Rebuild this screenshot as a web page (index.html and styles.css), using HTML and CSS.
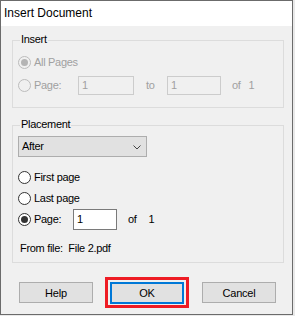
FILE: index.html
```html
<!DOCTYPE html>
<html>
<head>
<meta charset="utf-8">
<link rel="stylesheet" href="styles.css">
</head>
<body>
<div class="dialog">
  <div class="titlebar">Insert Document</div>
  <div class="content">
    <div class="group group-insert">
      <span class="legend">Insert</span>
      <div class="row row-a">
        <span class="radio radio-dis checked"></span>
        <span class="txt disabled">All Pages</span>
      </div>
      <div class="row row-b">
        <span class="radio radio-dis"></span>
        <span class="txt disabled lbl-page">Page:</span>
        <span class="input input-dis in1">1</span>
        <span class="txt disabled lbl-to">to</span>
        <span class="input input-dis in2">1</span>
        <span class="txt disabled lbl-of">of</span>
        <span class="txt disabled lbl-one">1</span>
      </div>
    </div>

    <div class="group group-place">
      <span class="legend">Placement</span>
      <div class="select">
        <span class="txt">After</span>
        <svg class="chev" width="8" height="5" viewBox="0 0 8 5"><polyline points="0.5,0.5 4,4 7.5,0.5" fill="none" stroke="#444" stroke-width="1"/></svg>
      </div>
      <div class="row row-c">
        <span class="radio"></span>
        <span class="txt">First page</span>
      </div>
      <div class="row row-c">
        <span class="radio"></span>
        <span class="txt">Last page</span>
      </div>
      <div class="row row-c">
        <span class="radio checked"></span>
        <span class="txt lbl-page2">Page:</span>
        <span class="input in3">1</span>
        <span class="txt lbl-of2">of</span>
        <span class="txt lbl-one2">1</span>
      </div>
      <div class="fromfile txt">From file:&nbsp; File 2.pdf</div>
    </div>

    <div class="buttons">
      <div class="btn btn-help">Help</div>
      <div class="btn btn-ok">OK<span class="mark"></span></div>
      <div class="btn btn-cancel">Cancel</div>
    </div>
  </div>
</div>
</body>
</html>
```

FILE: styles.css
```css
* { box-sizing: border-box; }
html, body { margin: 0; padding: 0; }
body {
  background: #e9e9e9;
  width: 295px;
  height: 316px;
  overflow: hidden;
  font-family: "Liberation Sans", Arial, sans-serif;
  font-size: 11px;
  color: #000;
}
.dialog {
  width: 293px;
  height: 315px;
  border: 1px solid #6b6b6b;
  background: #f0f0f0;
  display: flex;
  flex-direction: column;
}
.titlebar {
  height: 25px;
  background: #fff;
  font-size: 12px;
  line-height: 25px;
  padding-left: 3px;
  color: #000;
}
.content {
  display: flex;
  flex-direction: column;
  padding: 14px 8px 0 11px;
}
.txt { letter-spacing: -0.3px; white-space: nowrap; line-height: 13px; }
.disabled { color: #a0a0a0; }
.group {
  position: relative;
  border: 1px solid #dcdcdc;
  width: 272px;
  display: flex;
  flex-direction: column;
  padding-left: 5px;
}
.legend {
  position: absolute;
  left: 7px;
  top: -8px;
  padding: 0 1px;
  background: #f0f0f0;
  line-height: 13px;
  letter-spacing: -0.3px;
  color: #000;
}
.group-insert { height: 68px; padding-top: 11px; }
.group-place { height: 138px; padding-top: 10px; margin-top: 17px; }
.row { display: flex; align-items: center; }
.row-a { height: 21px; }
.row-b { height: 20px; margin-top: 2px; }
.row-c { height: 21px; }
.radio {
  width: 13px;
  height: 13px;
  border: 1px solid #333;
  border-radius: 50%;
  background: #fff;
  margin-right: 3px;
  display: flex;
  align-items: center;
  justify-content: center;
  flex: none;
}
.radio.checked::after {
  content: "";
  width: 7px;
  height: 7px;
  border-radius: 50%;
  background: #333;
}
.radio-dis { border-color: #bcbcbc; background: #f0f0f0; }
.radio-dis.checked::after { background: #b4b4b4; }
.input {
  height: 19px;
  border: 1px solid #7a7a7a;
  background: #fff;
  padding-left: 3px;
  line-height: 17px;
  flex: none;
}
.input-dis { border-color: #cccccc; background: #f0f0f0; color: #a0a0a0; }
.lbl-page { width: 44px; }
.in1 { width: 56px; }
.lbl-to { margin-left: 12px; width: 21px; }
.in2 { width: 54px; }
.lbl-of { margin-left: 11px; }
.lbl-one { margin-left: 8px; }
.select {
  width: 129px;
  height: 21px;
  border: 1px solid #adadad;
  background: #e1e1e1;
  display: flex;
  align-items: center;
  justify-content: space-between;
  padding: 0 5px 0 3px;
  margin-bottom: 10px;
}
.chev { display: block; margin-top: 1px; }
.lbl-page2 { width: 39px; }
.in3 { width: 44px; height: 21px; line-height: 19px; }
.lbl-of2 { margin-left: 11px; }
.lbl-one2 { margin-left: 12px; }
.fromfile { margin-top: 12px; padding-left: 2px; }
.buttons {
  display: flex;
  margin-top: 19px;
  margin-left: 7px;
}
.btn {
  position: relative;
  width: 74px;
  height: 21px;
  border: 1px solid #adadad;
  background: #e1e1e1;
  display: flex;
  align-items: center;
  justify-content: center;
  letter-spacing: -0.2px;
}
.btn-ok {
  width: 74px;
  height: 22px;
  border: 2px solid #0078d7;
  margin-left: 17px;
}
.btn-cancel { margin-left: 18px; }
.mark {
  position: absolute;
  left: -7px;
  top: -7px;
  right: -7px;
  bottom: -6px;
  border: 3px solid #ee1c24;
}
```
